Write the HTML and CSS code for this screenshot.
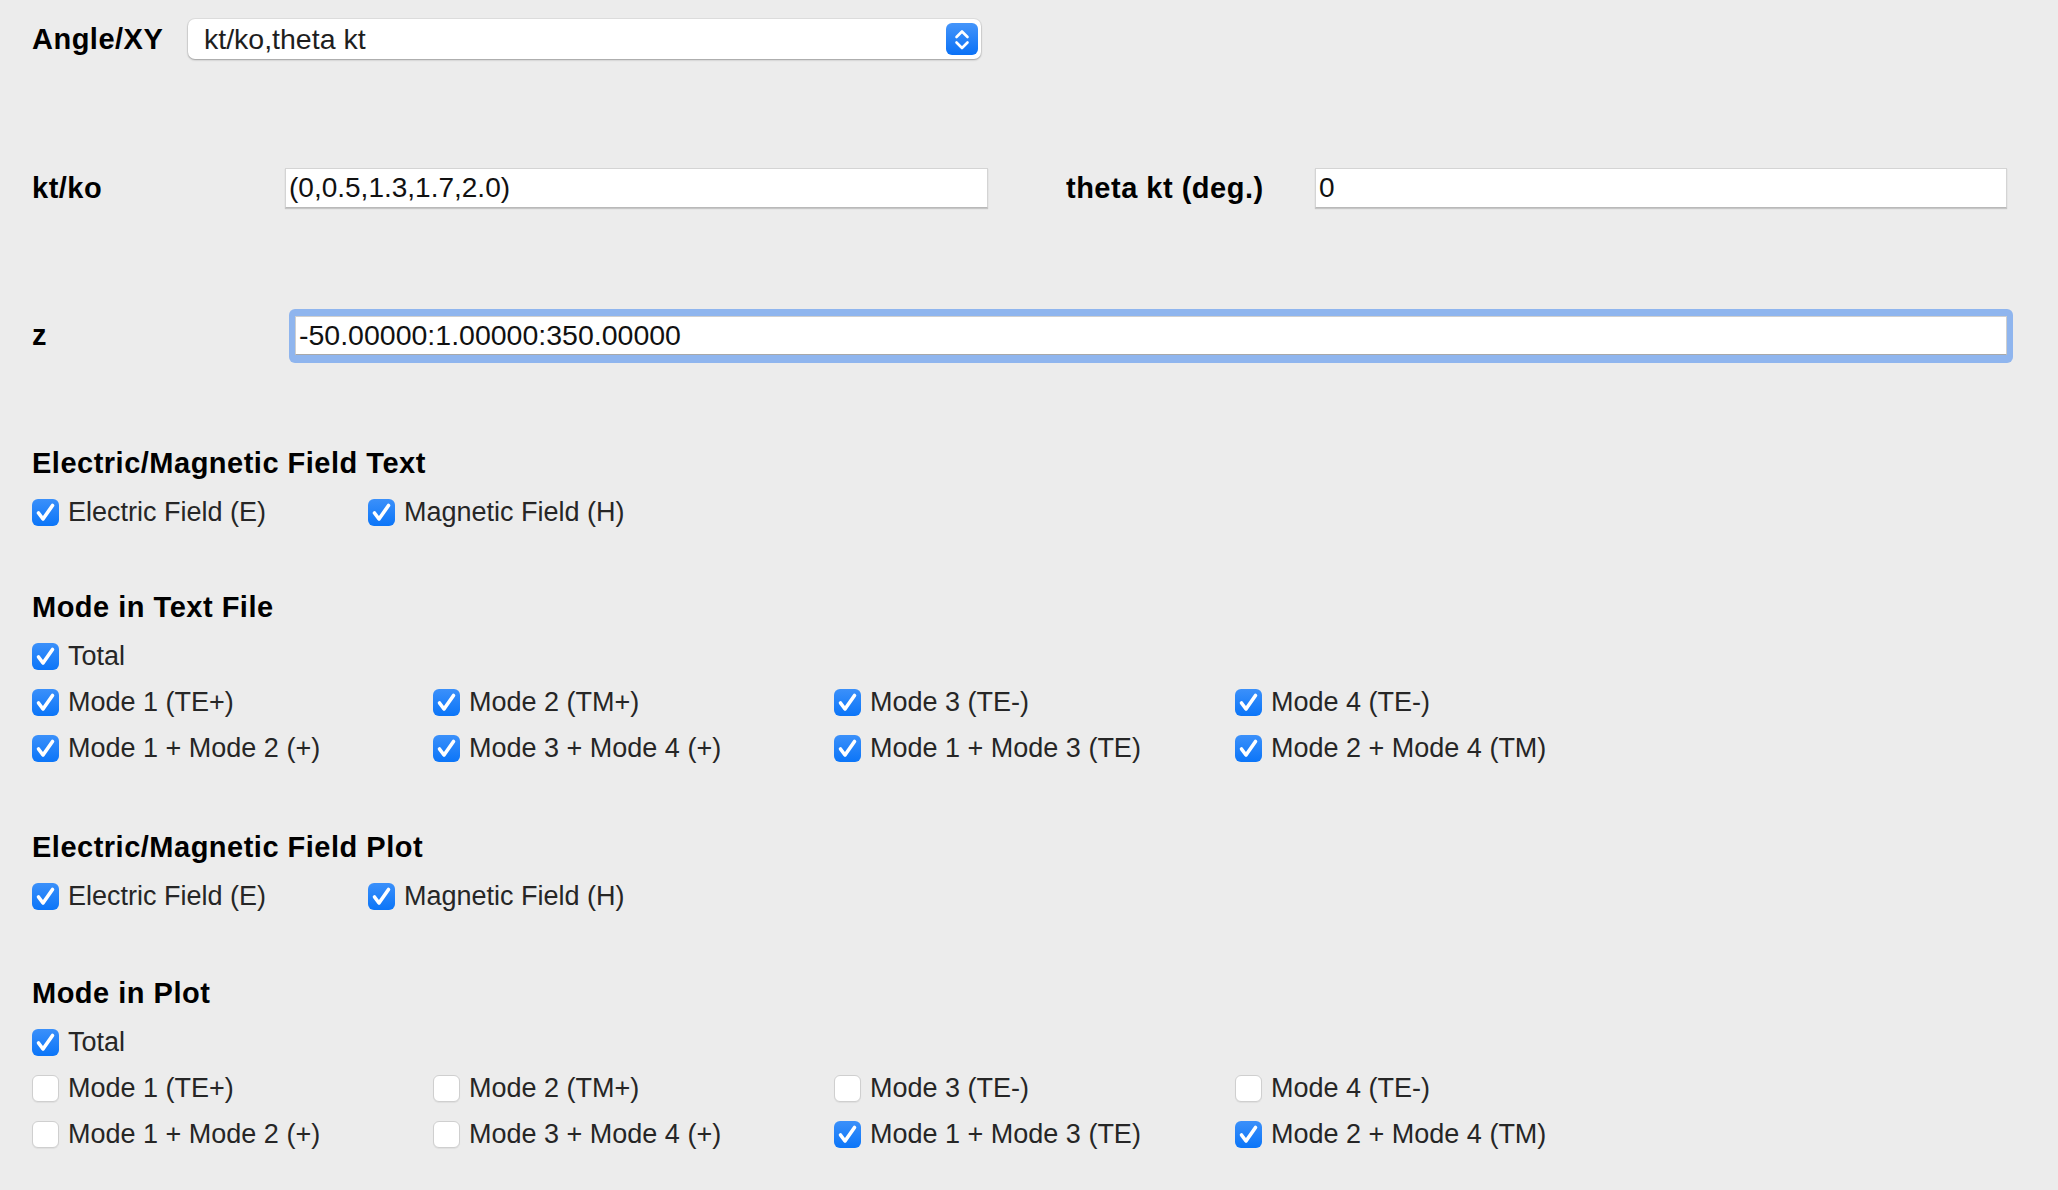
FILE: index.html
```html
<!DOCTYPE html>
<html>
<head>
<meta charset="utf-8">
<title>Field settings</title>
<link rel="stylesheet" href="styles.css">
</head>
<body>
<main class="page">
  <div class="row row-select">
    <span class="field-label label-select">Angle/XY</span>
    <div class="select">
      <span class="select-value">kt/ko,theta kt</span>
      <span class="stepper"><svg viewBox="0 0 32 32" width="32" height="32"><path d="M10.5 14 L16 8.5 L21.5 14 M10.5 19.5 L16 25 L21.5 19.5" fill="none" stroke="#fff" stroke-width="2.6" stroke-linecap="round" stroke-linejoin="round"/></svg></span>
    </div>
  </div>

  <div class="row row-kt">
    <span class="field-label label-kt">kt/ko</span>
    <input class="text-input input-kt" value="(0,0.5,1.3,1.7,2.0)">
    <span class="field-label label-theta">theta kt (deg.)</span>
    <input class="text-input input-theta" value="0">
  </div>

  <div class="row row-z">
    <span class="field-label label-z">z</span>
    <span class="focus-ring"><input class="text-input input-z" value="-50.00000:1.00000:350.00000"></span>
  </div>

  <section class="group group-field-text">
    <h2>Electric/Magnetic Field Text</h2>
    <div class="check-pair">
      <span class="check"><span class="box on"><svg viewBox="0 0 27 27" width="27" height="27"><path d="M6.5 14 L11 20 L20.5 6.5" fill="none" stroke="#fff" stroke-width="3.6" stroke-linecap="round" stroke-linejoin="round"/></svg></span>Electric Field (E)</span>
      <span class="check"><span class="box on"><svg viewBox="0 0 27 27" width="27" height="27"><path d="M6.5 14 L11 20 L20.5 6.5" fill="none" stroke="#fff" stroke-width="3.6" stroke-linecap="round" stroke-linejoin="round"/></svg></span>Magnetic Field (H)</span>
    </div>
  </section>

  <section class="group group-mode-text">
    <h2>Mode in Text File</h2>
    <div class="check-grid">
      <span class="check check-total"><span class="box on"><svg viewBox="0 0 27 27" width="27" height="27"><path d="M6.5 14 L11 20 L20.5 6.5" fill="none" stroke="#fff" stroke-width="3.6" stroke-linecap="round" stroke-linejoin="round"/></svg></span>Total</span>
      <span class="check"><span class="box on"><svg viewBox="0 0 27 27" width="27" height="27"><path d="M6.5 14 L11 20 L20.5 6.5" fill="none" stroke="#fff" stroke-width="3.6" stroke-linecap="round" stroke-linejoin="round"/></svg></span>Mode 1 (TE+)</span>
      <span class="check"><span class="box on"><svg viewBox="0 0 27 27" width="27" height="27"><path d="M6.5 14 L11 20 L20.5 6.5" fill="none" stroke="#fff" stroke-width="3.6" stroke-linecap="round" stroke-linejoin="round"/></svg></span>Mode 2 (TM+)</span>
      <span class="check"><span class="box on"><svg viewBox="0 0 27 27" width="27" height="27"><path d="M6.5 14 L11 20 L20.5 6.5" fill="none" stroke="#fff" stroke-width="3.6" stroke-linecap="round" stroke-linejoin="round"/></svg></span>Mode 3 (TE-)</span>
      <span class="check"><span class="box on"><svg viewBox="0 0 27 27" width="27" height="27"><path d="M6.5 14 L11 20 L20.5 6.5" fill="none" stroke="#fff" stroke-width="3.6" stroke-linecap="round" stroke-linejoin="round"/></svg></span>Mode 4 (TE-)</span>
      <span class="check"><span class="box on"><svg viewBox="0 0 27 27" width="27" height="27"><path d="M6.5 14 L11 20 L20.5 6.5" fill="none" stroke="#fff" stroke-width="3.6" stroke-linecap="round" stroke-linejoin="round"/></svg></span>Mode 1 + Mode 2 (+)</span>
      <span class="check"><span class="box on"><svg viewBox="0 0 27 27" width="27" height="27"><path d="M6.5 14 L11 20 L20.5 6.5" fill="none" stroke="#fff" stroke-width="3.6" stroke-linecap="round" stroke-linejoin="round"/></svg></span>Mode 3 + Mode 4 (+)</span>
      <span class="check"><span class="box on"><svg viewBox="0 0 27 27" width="27" height="27"><path d="M6.5 14 L11 20 L20.5 6.5" fill="none" stroke="#fff" stroke-width="3.6" stroke-linecap="round" stroke-linejoin="round"/></svg></span>Mode 1 + Mode 3 (TE)</span>
      <span class="check"><span class="box on"><svg viewBox="0 0 27 27" width="27" height="27"><path d="M6.5 14 L11 20 L20.5 6.5" fill="none" stroke="#fff" stroke-width="3.6" stroke-linecap="round" stroke-linejoin="round"/></svg></span>Mode 2 + Mode 4 (TM)</span>
    </div>
  </section>

  <section class="group group-field-plot">
    <h2>Electric/Magnetic Field Plot</h2>
    <div class="check-pair">
      <span class="check"><span class="box on"><svg viewBox="0 0 27 27" width="27" height="27"><path d="M6.5 14 L11 20 L20.5 6.5" fill="none" stroke="#fff" stroke-width="3.6" stroke-linecap="round" stroke-linejoin="round"/></svg></span>Electric Field (E)</span>
      <span class="check"><span class="box on"><svg viewBox="0 0 27 27" width="27" height="27"><path d="M6.5 14 L11 20 L20.5 6.5" fill="none" stroke="#fff" stroke-width="3.6" stroke-linecap="round" stroke-linejoin="round"/></svg></span>Magnetic Field (H)</span>
    </div>
  </section>

  <section class="group group-mode-plot">
    <h2>Mode in Plot</h2>
    <div class="check-grid">
      <span class="check check-total"><span class="box on"><svg viewBox="0 0 27 27" width="27" height="27"><path d="M6.5 14 L11 20 L20.5 6.5" fill="none" stroke="#fff" stroke-width="3.6" stroke-linecap="round" stroke-linejoin="round"/></svg></span>Total</span>
      <span class="check"><span class="box off"></span>Mode 1 (TE+)</span>
      <span class="check"><span class="box off"></span>Mode 2 (TM+)</span>
      <span class="check"><span class="box off"></span>Mode 3 (TE-)</span>
      <span class="check"><span class="box off"></span>Mode 4 (TE-)</span>
      <span class="check"><span class="box off"></span>Mode 1 + Mode 2 (+)</span>
      <span class="check"><span class="box off"></span>Mode 3 + Mode 4 (+)</span>
      <span class="check"><span class="box on"><svg viewBox="0 0 27 27" width="27" height="27"><path d="M6.5 14 L11 20 L20.5 6.5" fill="none" stroke="#fff" stroke-width="3.6" stroke-linecap="round" stroke-linejoin="round"/></svg></span>Mode 1 + Mode 3 (TE)</span>
      <span class="check"><span class="box on"><svg viewBox="0 0 27 27" width="27" height="27"><path d="M6.5 14 L11 20 L20.5 6.5" fill="none" stroke="#fff" stroke-width="3.6" stroke-linecap="round" stroke-linejoin="round"/></svg></span>Mode 2 + Mode 4 (TM)</span>
    </div>
  </section>
</main>
</body>
</html>
```

FILE: styles.css
```css
html, body {
  margin: 0;
  background: #ececec;
}

body {
  font-family: "Liberation Sans", Arial, Helvetica, sans-serif;
  color: #262626;
}

.page {
  padding: 19px 0 0 32px;
}

.row {
  display: flex;
  align-items: center;
}

.field-label {
  font-weight: 700;
  font-size: 29px;
  letter-spacing: 0.5px;
  color: #000;
  flex: none;
}

/* Angle/XY row */
.row-select {
  height: 40px;
}

.label-select {
  width: 156px;
}

.select {
  width: 793px;
  height: 40px;
  box-sizing: border-box;
  background: #fff;
  border-radius: 7px;
  box-shadow: 0 0 0 1px rgba(0, 0, 0, 0.05), 0 1px 2px rgba(0, 0, 0, 0.3);
  display: flex;
  align-items: center;
  justify-content: space-between;
  padding: 0 3px 0 16px;
}

.select-value {
  font-size: 28.5px;
  color: #1e1e1e;
}

.stepper {
  display: block;
  width: 32px;
  height: 32px;
  border-radius: 6px;
  background: linear-gradient(#4595fa, #0a71f6);
}

.stepper svg {
  display: block;
}

/* text inputs */
.text-input {
  font-family: inherit;
  font-size: 28px;
  color: #111;
  background: #fff;
  border: 1px solid #d4d4d4;
  border-bottom-color: #b9b9b9;
  box-shadow: 0 1px 1px rgba(0, 0, 0, 0.16);
  height: 40px;
  box-sizing: border-box;
  padding: 0 3px;
  margin: 0;
  outline: none;
  border-radius: 0;
  flex: none;
}

.row-kt {
  margin-top: 109px;
  height: 40px;
}

.label-kt {
  width: 253px;
}

.input-kt {
  width: 703px;
}

.label-theta {
  margin-left: 78px;
  width: 249px;
}

.input-theta {
  width: 692px;
}

.row-z {
  margin-top: 108px;
  height: 39px;
}

.label-z {
  width: 257px;
}

.focus-ring {
  display: block;
  padding: 7px 6px 8px;
  margin: -7px 0 -8px;
  background: #8fb5ee;
  border-radius: 6px;
}

.input-z {
  display: block;
  width: 1712px;
  height: 39px;
  font-size: 28.5px;
  border-color: #cfcfcf;
  border-bottom-color: #a8a8a8;
  box-shadow: none;
  padding-left: 3px;
}

/* groups of checkboxes */
.group-field-text {
  margin-top: 91px;
}

.group-mode-text {
  margin-top: 55px;
}

.group-field-plot {
  margin-top: 59px;
}

.group-mode-plot {
  margin-top: 57px;
}

.group h2 {
  margin: 0 0 9px;
  height: 34px;
  line-height: 34px;
  font-size: 29px;
  letter-spacing: 0.5px;
  font-weight: 700;
  color: #000;
}

.check-pair {
  display: flex;
  height: 46px;
  align-items: center;
}

.check-pair .check:first-child {
  width: 336px;
}

.check-grid {
  display: grid;
  grid-template-columns: repeat(4, 401px);
  grid-auto-rows: 46px;
}

.check-total {
  grid-column: 1 / -1;
}

.check {
  display: flex;
  align-items: center;
  gap: 9px;
  font-size: 27px;
  color: #262626;
  white-space: nowrap;
}

.box {
  width: 27px;
  height: 27px;
  border-radius: 6px;
  box-sizing: border-box;
  flex: none;
}

.box svg {
  display: block;
}

.box.on {
  background: linear-gradient(#3b90fa, #0b75f8);
}

.box.off {
  background: #fff;
  border: 1px solid #cfcfcf;
  box-shadow: 0 1px 1px rgba(0, 0, 0, 0.06);
}
```
